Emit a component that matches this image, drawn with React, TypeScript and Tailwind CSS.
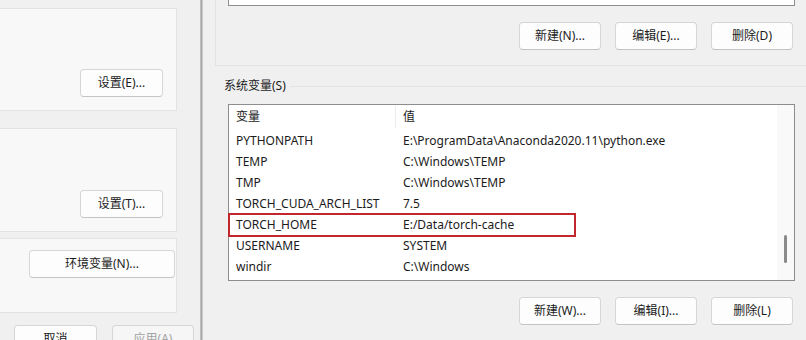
const font = { fontFamily: '"Noto Sans", "Noto Sans CJK SC", sans-serif' };

type Btn = { label: string; disabled?: boolean; className?: string };

function WinButton({ label, disabled, className }: Btn) {
  return (
    <div
      className={`shrink-0 flex items-center justify-center rounded-[4px] border border-[#d6d6d6] border-b-[#c4c4c4] text-[12px] ${
        disabled ? "bg-[#f6f6f6] text-[#a3a3a3]" : "bg-[#fdfdfd] text-[#1b1b1b]"
      } ${className ?? ""}`}
    >
      {label}
    </div>
  );
}

const rows: [string, string][] = [
  ["PYTHONPATH", "E:\\ProgramData\\Anaconda2020.11\\python.exe"],
  ["TEMP", "C:\\Windows\\TEMP"],
  ["TMP", "C:\\Windows\\TEMP"],
  ["TORCH_CUDA_ARCH_LIST", "7.5"],
  ["TORCH_HOME", "E:/Data/torch-cache"],
  ["USERNAME", "SYSTEM"],
  ["windir", "C:\\Windows"],
];

function LeftPanel() {
  return (
    <div className="w-[200px] shrink-0 bg-[#f0f0f0] flex flex-col">
      <div className="shrink-0 mt-[8px] h-[103px] w-[177px] border-y border-r border-[#e3e3e3] bg-[#f8f8f8] flex justify-end pt-[60px] pr-[13px]">
        <WinButton label="设置(E)..." className="w-[83px] h-[28px]" />
      </div>
      <div className="shrink-0 mt-[17px] h-[104px] w-[177px] border-y border-r border-[#e3e3e3] bg-[#f8f8f8] flex justify-end pt-[61px] pr-[13px]">
        <WinButton label="设置(T)..." className="w-[83px] h-[28px]" />
      </div>
      <div className="shrink-0 mt-[6px] h-[75px] w-[177px] border-y border-r border-[#e3e3e3] bg-[#f8f8f8] flex justify-end pt-[11px] pr-[1px]">
        <WinButton label="环境变量(N)..." className="w-[146px] h-[28px]" />
      </div>
      <div className="shrink-0 mt-[12px] flex pl-[14px] gap-[15px]">
        <WinButton label="取消" className="w-[83px] h-[28px]" />
        <WinButton label="应用(A)" disabled className="w-[82px] h-[28px]" />
      </div>
    </div>
  );
}

function RightPanel() {
  return (
    <div className="flex-1 bg-[#f0f0f0] flex flex-col">
      {/* user variables group (bottom part) */}
      <div className="shrink-0 ml-[12px] h-[66px] border-l border-b border-[#e2e2e2] pl-[12px]">
        <div className="h-[6px] w-[567px] border-x border-b border-[#8d8d8d] bg-white" />
        <div className="mt-[16px] w-[567px] flex justify-end gap-[14px] pr-[2px]">
          <WinButton label="新建(N)..." className="w-[82px] h-[28px]" />
          <WinButton label="编辑(E)..." className="w-[82px] h-[28px]" />
          <WinButton label="删除(D)" className="w-[82px] h-[28px]" />
        </div>
      </div>

      {/* system variables */}
      <div className="shrink-0 mt-[11px] flex items-center h-[18px]">
        <span className="pl-[21px] text-[12px] text-[#1b1b1b] leading-[18px]">系统变量(S)</span>
        <div className="flex-1 ml-[4px] border-t border-[#e2e2e2]" />
      </div>

      <div className="shrink-0 mt-[9px] ml-[25px] w-[567px] h-[177px] border border-[#8d8d8d] bg-white relative flex text-[12px] text-[#1b1b1b]">
        <div className="flex-1 flex flex-col">
          <div className="mt-[1px] h-[22px] flex items-center">
            <div className="w-[167px] pl-[7px] h-full flex items-center border-r border-[#ececec]">变量</div>
            <div className="pl-[7px]">值</div>
          </div>
          <div className="mt-[2px] flex flex-col">
            {rows.map(([k, v]) => (
              <div key={k} className="h-[21px] flex items-center">
                <div className="w-[167px] pl-[7px]">{k}</div>
                <div className="pl-[7px]">{v}</div>
              </div>
            ))}
          </div>
        </div>
        <div className="w-[17px] bg-[#f9f9f9] flex flex-col">
          <div className="mt-[130px] ml-[7px] w-[3px] h-[28px] rounded-full bg-[#8a8a8a]" />
        </div>
        <div className="absolute left-[-1px] top-[108px] w-[348px] h-[24px] border-2 border-[#c4262e]" />
      </div>

      <div className="shrink-0 mt-[16px] ml-[25px] w-[567px] flex justify-end gap-[14px] pr-[2px]">
        <WinButton label="新建(W)..." className="w-[82px] h-[28px]" />
        <WinButton label="编辑(I)..." className="w-[82px] h-[28px]" />
        <WinButton label="删除(L)" className="w-[82px] h-[28px]" />
      </div>
    </div>
  );
}

export default function App() {
  return (
    <div className="w-[806px] h-[340px] overflow-hidden flex" style={font}>
      <LeftPanel />
      <div className="w-[3px] shrink-0 bg-gradient-to-r from-[#c8c8c8] via-[#a8a8a8] to-[#dcdcdc]" />
      <RightPanel />
    </div>
  );
}
